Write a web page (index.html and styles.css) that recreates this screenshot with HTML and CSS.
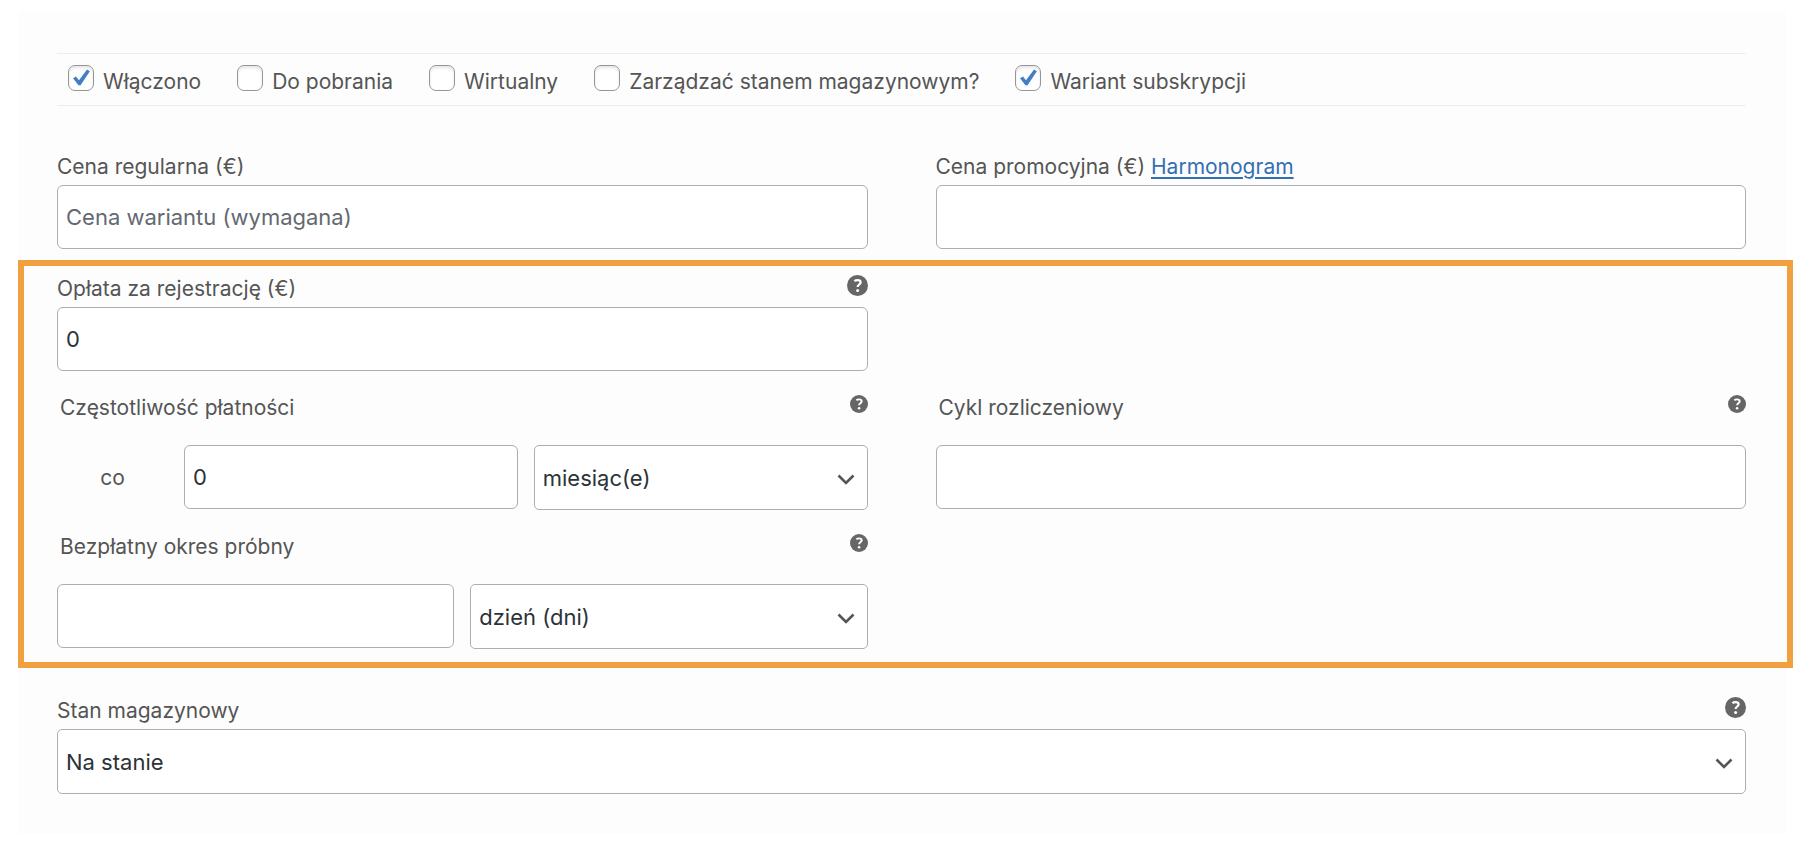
FILE: index.html
```html
<!DOCTYPE html>
<html lang="pl">
<head>
<meta charset="utf-8">
<title>Wariant produktu</title>
<link rel="stylesheet" href="styles.css">
</head>
<body>
<svg class="sprite" aria-hidden="true">
  <symbol id="help" viewBox="0 0 21 21">
    <circle cx="10.5" cy="10.5" r="10.5" fill="#666"/>
    <path d="M7.4 6.2C8.2 5.5 9.4 5.1 10.6 5.1c1.9 0 3 .9 3 2.2 0 1.1-.6 1.7-1.5 2.3-.9.6-1.4 1-1.4 2.2v.3" fill="none" stroke="#fff" stroke-width="2.3"/>
    <circle cx="10.6" cy="15.4" r="1.5" fill="#fff"/>
  </symbol>
</svg>
<form class="panel">
  <div class="options">
    <label class="option"><input class="tick" type="checkbox" checked><span>Włączono</span></label>
    <label class="option"><input class="tick" type="checkbox"><span>Do pobrania</span></label>
    <label class="option"><input class="tick" type="checkbox"><span>Wirtualny</span></label>
    <label class="option"><input class="tick" type="checkbox"><span>Zarządzać stanem magazynowym?</span></label>
    <label class="option"><input class="tick" type="checkbox" checked><span>Wariant subskrypcji</span></label>
  </div>

  <div class="columns">
    <div class="field">
      <div class="caption"><label class="name" for="price">Cena regularna (€)</label></div>
      <input class="control" id="price" type="text" placeholder="Cena wariantu (wymagana)">
    </div>
    <div class="field">
      <div class="caption"><span class="name"><label for="sale">Cena promocyjna (€)</label> <a class="link" href="#">Harmonogram</a></span></div>
      <input class="control" id="sale" type="text">
    </div>
  </div>

  <section class="highlight">
    <div class="columns">
      <div class="field">
        <div class="caption"><label class="name" for="fee">Opłata za rejestrację (€)</label><svg class="help"><use href="#help"/></svg></div>
        <input class="control" id="fee" type="text" value="0">
      </div>
    </div>
    <div class="columns">
      <div class="field field-spaced">
        <div class="caption caption-inset"><label class="name" for="interval">Częstotliwość płatności</label><svg class="help help-small"><use href="#help"/></svg></div>
        <div class="group">
          <span class="every">co</span>
          <input class="control" id="interval" type="text" value="0">
          <select class="control select" aria-label="Okres płatności"><option>miesiąc(e)</option></select>
        </div>
      </div>
      <div class="field field-spaced">
        <div class="caption caption-inset"><label class="name" for="cycle">Cykl rozliczeniowy</label><svg class="help help-small"><use href="#help"/></svg></div>
        <input class="control" id="cycle" type="text">
      </div>
    </div>
    <div class="columns">
      <div class="field field-spaced">
        <div class="caption caption-inset"><label class="name" for="trial">Bezpłatny okres próbny</label><svg class="help help-small"><use href="#help"/></svg></div>
        <div class="group">
          <input class="control" id="trial" type="text">
          <select class="control select" aria-label="Jednostka okresu próbnego"><option>dzień (dni)</option></select>
        </div>
      </div>
    </div>
  </section>

  <div class="field">
    <div class="caption"><label class="name" for="stock">Stan magazynowy</label><svg class="help"><use href="#help"/></svg></div>
    <select class="control select" id="stock"><option>Na stanie</option></select>
  </div>
</form>
</body>
</html>
```
FILE: styles.css
```css
*, *::before, *::after { box-sizing: border-box; }

body {
  margin: 0;
  padding: 11px 27px 18px 18px;
  background: #fff;
  color: #555;
  font: 21px/24px Inter, "Liberation Sans", sans-serif;
}

.sprite { display: none; }

.panel {
  padding: 42px 41px 40px 39px;
  background: #fdfdfd;
}

.options {
  display: flex;
  gap: 36px;
  margin-bottom: 47px;
  padding: 11px;
  border-top: 1px solid #eee;
  border-bottom: 1px solid #eee;
}

.option {
  display: flex;
  gap: 9px;
  white-space: nowrap;
}

.option span { padding-top: 5px; }

.tick {
  appearance: none;
  flex: none;
  width: 26px;
  height: 26px;
  margin: 0;
  border: 1px solid #95969a;
  border-radius: 7px;
  background: #fff center / 24px 24px no-repeat;
  box-shadow: inset 0 2px 3px rgba(0, 0, 0, 0.1);
}

.tick:checked {
  background-image: url("data:image/svg+xml,%3Csvg xmlns='http://www.w3.org/2000/svg' viewBox='0 0 24 24'%3E%3Cpath d='M4 12.2 7 10.4 10 14.2 18 3.4 20.9 5.2 11.6 19.2H9.4Z' fill='%234380c2'/%3E%3C/svg%3E");
}

.columns {
  display: grid;
  grid-template-columns: 1fr 1fr;
  column-gap: 68px;
}

.columns + .columns { margin-top: 23px; }

.field {
  display: flex;
  flex-direction: column;
  gap: 6px;
}

.field-spaced { gap: 25px; }

.caption {
  display: flex;
  justify-content: space-between;
  align-items: flex-start;
}

.caption-inset { padding-left: 3px; }

.name { padding-top: 2px; }

.link {
  color: #3370b1;
  text-underline-offset: 3px;
}

.help {
  flex: none;
  width: 21px;
  height: 21px;
}

.help-small {
  width: 18px;
  height: 18px;
  margin-top: 1px;
}

.control {
  width: 100%;
  min-width: 0;
  height: 64px;
  margin: 0;
  padding: 0 8px;
  border: 1px solid #adaeb1;
  border-radius: 6px;
  background: #fff;
  color: #2c3338;
  font: 22px/30px Inter, "Liberation Sans", sans-serif;
}

.control::placeholder {
  color: #646970;
  opacity: 1;
}

.select {
  appearance: none;
  height: 65px;
  border-radius: 5px;
  background: #fff url("data:image/svg+xml,%3Csvg xmlns='http://www.w3.org/2000/svg' viewBox='0 0 18 12'%3E%3Cpath d='M1.5 1.5 9 9 16.5 1.5' fill='none' stroke='%23555' stroke-width='2.6'/%3E%3C/svg%3E") right 12px top 28px / 18px 12px no-repeat;
}

.group {
  display: flex;
  gap: 16px;
}

.group .control { flex: 1 1 0; }

.every {
  flex: 0 0 111px;
  align-self: center;
  text-align: center;
}

.highlight {
  margin: 11px -47px 29px -39px;
  padding: 9px 41px 13px 33px;
  border: 6px solid #f29f3f;
}
```
